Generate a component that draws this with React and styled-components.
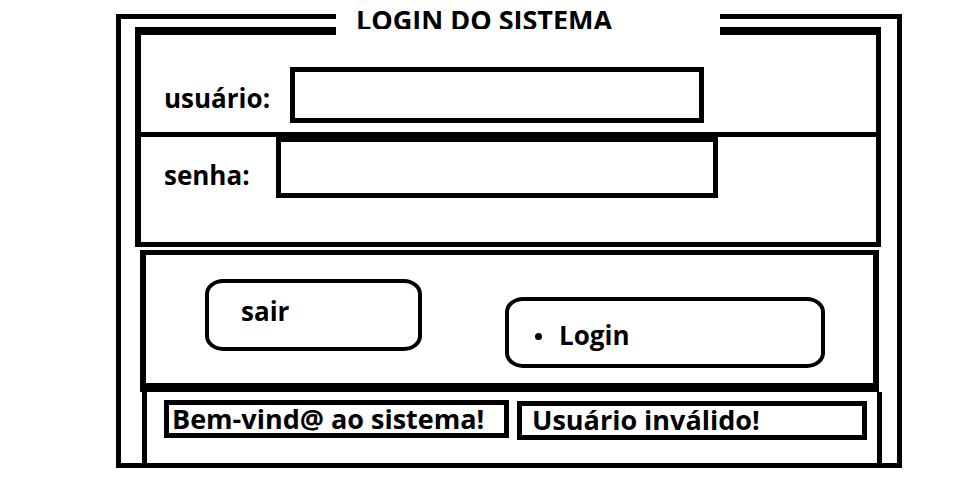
import React from "react";
import styled, { createGlobalStyle } from "styled-components";

const GlobalStyle = createGlobalStyle`
  html, body {
    margin: 0;
    padding: 0;
    background: #ffffff;
  }
  body {
    font-family: "Open Sans", "Noto Sans", "DejaVu Sans", sans-serif;
    font-weight: 700;
    color: #000000;
  }
`;

const App = () => {
  return (
    <>
      <GlobalStyle />
      <Frame>
        <Title>LOGIN DO SISTEMA</Title>

        {/* usuário / senha */}
        <FormPanel>
          <FieldRow $h={97} $divider>
            <Label $w={126} $top={45}>
              usuário:
            </Label>
            <Input type="text" $w={414} $h={56} $top={32} />
          </FieldRow>
          <FieldRow $h={105}>
            <Label $w={112} $top={20}>
              senha:
            </Label>
            <Input type="password" $w={442} $h={61} $top={0} />
          </FieldRow>
        </FormPanel>

        {/* botoes */}
        <ButtonPanel>
          <Button $w={217} $h={72} $top={24} $pt={10} $pl={32}>
            sair
          </Button>
          <Button $w={320} $h={71} $top={42} $pt={16} $pl={26}>
            <Bullet />
            Login
          </Button>
        </ButtonPanel>

        {/* mensagens */}
        <MessagePanel>
          <Message $w={345} $h={38} $pl={3}>
            Bem-vind@ ao sistema!
          </Message>
          <Message $w={350} $h={39} $pl={10} $top={1}>
            Usuário inválido!
          </Message>
        </MessagePanel>
      </Frame>
    </>
  );
};

const Frame = styled.fieldset`
  box-sizing: border-box;
  width: 786px;
  margin: 4px 0 0 116px;
  padding: 0;
  border: 5px solid #000;
  min-inline-size: 0;
`;

// the title knocks a gap out of both the outer and the inner top border
const Title = styled.legend`
  position: relative;
  z-index: 1;
  box-sizing: border-box;
  width: 384px;
  margin-left: 215px;
  padding: 7px 0 0 20px;
  background: #fff;
  font-size: 27px;
  line-height: 18px;
  white-space: nowrap;

  &::after {
    content: "";
    position: absolute;
    left: 0;
    right: 0;
    top: 100%;
    height: 10px;
    background: #fff;
  }
`;

const FormPanel = styled.div`
  margin: -2px 16px 0 14px;
  border-style: solid;
  border-color: #000;
  border-width: 8px 5px 5px 6px;
`;

const FieldRow = styled.div`
  display: flex;
  align-items: flex-start;
  height: ${(p) => p.$h}px;
  padding-left: 23px;
  border-bottom: ${(p) => (p.$divider ? "5px solid #000" : "none")};
`;

const Label = styled.label`
  width: ${(p) => p.$w}px;
  margin-top: ${(p) => p.$top}px;
  font-size: 26px;
  line-height: normal;
`;

const Input = styled.input`
  box-sizing: border-box;
  width: ${(p) => p.$w}px;
  height: ${(p) => p.$h}px;
  margin: ${(p) => p.$top}px 0 0 0;
  padding: 0 8px;
  border: 5px solid #000;
  border-radius: 0;
  background: #fff;
  outline: none;
  font-family: inherit;
  font-size: 22px;
`;

const ButtonPanel = styled.div`
  display: flex;
  align-items: flex-start;
  gap: 83px;
  height: 128px;
  margin: 3px 18px 0 19px;
  padding-left: 59px;
  border-style: solid;
  border-color: #000;
  border-width: 5px 6px 9px 6px;
`;

const Button = styled.button`
  box-sizing: border-box;
  display: flex;
  align-items: flex-start;
  width: ${(p) => p.$w}px;
  height: ${(p) => p.$h}px;
  margin-top: ${(p) => p.$top}px;
  padding: ${(p) => p.$pt}px 0 0 ${(p) => p.$pl}px;
  border: 4px solid #000;
  border-radius: 18px / 15px;
  background: #fff;
  color: #000;
  font-family: inherit;
  font-weight: 700;
  font-size: 26px;
  line-height: normal;
  cursor: pointer;
`;

const Bullet = styled.span`
  width: 7px;
  height: 7px;
  margin: 16px 17px 0 0;
  border-radius: 50%;
  background: #000;
  flex-shrink: 0;
`;

const MessagePanel = styled.div`
  display: flex;
  align-items: flex-start;
  gap: 8px;
  height: 71px;
  margin: 0 15px 0 21px;
  padding: 8px 0 0 17px;
  border-style: solid;
  border-color: #000;
  border-width: 0 5px;
  box-sizing: border-box;
`;

const Message = styled.div`
  box-sizing: border-box;
  width: ${(p) => p.$w}px;
  height: ${(p) => p.$h}px;
  margin-top: ${(p) => p.$top || 0}px;
  padding-left: ${(p) => p.$pl}px;
  border: 5px solid #000;
  font-size: 27px;
  line-height: 28px;
  white-space: nowrap;
  overflow: hidden;
`;

export default App;
